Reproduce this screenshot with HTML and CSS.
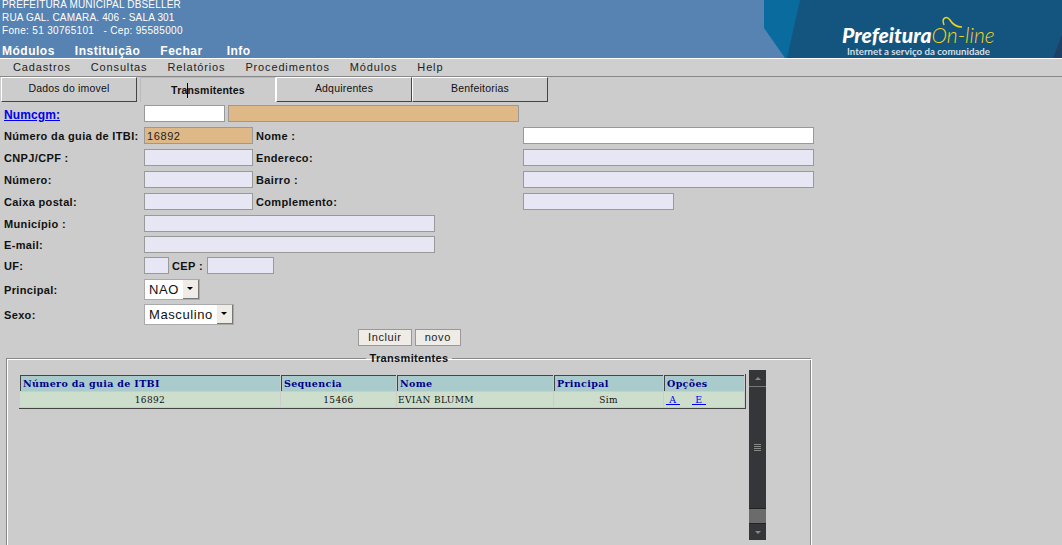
FILE: index.html
```html
<!DOCTYPE html>
<html lang="pt-BR">
<head>
    <meta charset="UTF-8">
    <title>Prefeitura On-line</title>
    <link rel="stylesheet" href="styles.css">
</head>
<body>
    <header class="topo">
        <div class="topo-info">
            <div class="endereco">
                <div>PREFEITURA MUNICIPAL DBSELLER</div>
                <div>RUA GAL. CAMARA. 406 - SALA 301</div>
                <div class="fone">Fone: 51 30765101 &nbsp;&nbsp;- Cep: 95585000</div>
            </div>
            <nav class="menu-topo">
                <a>Módulos</a>
                <a>Instituição</a>
                <a>Fechar</a>
                <a class="info">Info</a>
            </nav>
        </div>
        <div class="logo">
            <svg class="logo-fundo" width="298" height="58" viewBox="0 0 298 58">
                <polygon points="0,0 298,0 298,58 21,58 0,28" fill="#0a6b9e"/>
                <polygon points="36,0 298,0 298,58 23,58" fill="#14557f"/>
                <polygon points="289,58 295,43 298,35 298,58" fill="#1e3f66"/>
                <path d="M180 25 C177 17 183 16 186 20 C189 25 193 27 198 27" fill="none" stroke="#f0d21a" stroke-width="1.5"/>
            </svg>
            <div class="logo-texto">
                <div class="logo-nome"><b>Prefeitura</b><span>On-line</span></div>
                <div class="logo-sub">Internet a serviço da comunidade</div>
            </div>
        </div>
    </header>

    <nav class="menu">
        <a>Cadastros</a>
        <a>Consultas</a>
        <a>Relatórios</a>
        <a>Procedimentos</a>
        <a>Módulos</a>
        <a>Help</a>
    </nav>

    <div class="abas">
        <div class="aba">Dados do imovel</div>
        <div class="aba ativa">Transmitentes<span class="cursor"></span></div>
        <div class="aba">Adquirentes</div>
        <div class="aba">Benfeitorias</div>
    </div>

    <form class="form">
        <div class="linha linha-cgm">
            <a class="rotulo link">Numcgm:</a>
            <input class="campo branco w81" type="text">
            <input class="campo bege w291" type="text">
        </div>
        <div class="linha linha-dupla">
            <label class="rotulo">Número da guia de ITBI:</label>
            <input class="campo bege w109" type="text" value="16892">
            <label class="rotulo">Nome :</label>
            <input class="campo branco w291" type="text">
        </div>
        <div class="linha linha-dupla">
            <label class="rotulo">CNPJ/CPF :</label>
            <input class="campo w109" type="text">
            <label class="rotulo">Endereco:</label>
            <input class="campo w291" type="text">
        </div>
        <div class="linha linha-dupla">
            <label class="rotulo">Número:</label>
            <input class="campo w109" type="text">
            <label class="rotulo">Bairro :</label>
            <input class="campo w291" type="text">
        </div>
        <div class="linha linha-dupla">
            <label class="rotulo">Caixa postal:</label>
            <input class="campo w109" type="text">
            <label class="rotulo">Complemento:</label>
            <input class="campo w151" type="text">
        </div>
        <div class="linha linha-baixa">
            <label class="rotulo">Município :</label>
            <input class="campo w291" type="text">
        </div>
        <div class="linha linha-baixa">
            <label class="rotulo">E-mail:</label>
            <input class="campo w291" type="text">
        </div>
        <div class="linha">
            <label class="rotulo">UF:</label>
            <input class="campo w25" type="text">
            <label class="rotulo rotulo-cep">CEP :</label>
            <input class="campo w67" type="text">
        </div>
        <div class="linha linha-select">
            <label class="rotulo">Principal:</label>
            <div class="select">NAO<span class="seta"></span></div>
        </div>
        <div class="linha linha-select">
            <label class="rotulo">Sexo:</label>
            <div class="select">Masculino<span class="seta"></span></div>
        </div>
        <div class="botoes">
            <button type="button">Incluir</button>
            <button type="button">novo</button>
        </div>
    </form>

    <fieldset class="quadro">
        <legend>Transmitentes</legend>
        <div class="quadro-corpo">
            <table class="grid">
                <tr>
                    <th class="c1">Número da guia de ITBI</th>
                    <th class="c2">Sequencia</th>
                    <th class="c3">Nome</th>
                    <th class="c4">Principal</th>
                    <th class="c5">Opções</th>
                </tr>
                <tr>
                    <td class="centro">16892</td>
                    <td class="centro">15466</td>
                    <td>EVIAN BLUMM</td>
                    <td class="centro">Sim</td>
                    <td class="opcoes"><a>&nbsp;A&nbsp;</a><a>&nbsp;E&nbsp;</a></td>
                </tr>
            </table>
            <div class="scroll">
                <div class="scroll-bt"><span class="sobe"></span></div>
                <div class="scroll-barra"><span class="grip"></span></div>
                <div class="scroll-trilho"></div>
                <div class="scroll-bt"><span class="desce"></span></div>
            </div>
        </div>
    </fieldset>
</body>
</html>
```

FILE: styles.css
```css
html, body {
    margin: 0;
    padding: 0;
    height: 545px;
    overflow: hidden;
}
body {
    background: #cccccc;
    font-family: "Liberation Sans", Arial, sans-serif;
    color: #000;
}
.topo {
    display: flex;
    justify-content: space-between;
    height: 58px;
    background: #5783b3;
    overflow: hidden;
}
.topo-info {
    padding-left: 2px;
    color: #fff;
}
.endereco {
    font-size: 10px;
    line-height: 13px;
    letter-spacing: 0.17px;
    height: 47px;
    margin-top: -2px;
}
.endereco .fone {
    letter-spacing: 0.32px;
}
.menu-topo {
    display: flex;
    gap: 20px;
    font-size: 12px;
    font-weight: bold;
    line-height: 13px;
    letter-spacing: 0.5px;
}
.menu-topo .info {
    margin-left: 4px;
}
.logo {
    position: relative;
    width: 298px;
    height: 58px;
}
.logo-fundo {
    display: block;
}
.logo-texto {
    position: absolute;
    left: 78px;
    top: 24px;
    color: #fff;
}
.logo-nome {
    font-family: "Lato", sans-serif;
    font-size: 21px;
    line-height: 21px;
    white-space: nowrap;
}
.logo-nome b {
    font-style: italic;
    font-weight: 900;
}
.logo-nome span {
    color: #f0d21a;
    font-style: italic;
    font-weight: 300;
}
.logo-sub {
    margin: 1px 0 0 5px;
    font-family: "Lato", sans-serif;
    font-size: 9.7px;
    line-height: 11px;
    font-weight: 700;
    color: #d5dfe6;
    white-space: nowrap;
}
.menu {
    display: flex;
    gap: 20px;
    height: 17px;
    padding-left: 13px;
    border-top: 1px solid #fff;
    border-bottom: 1px solid #888;
    background: #cfcfcf;
    font-size: 11px;
    line-height: 16px;
    letter-spacing: 0.85px;
    color: #222;
}
.abas {
    display: flex;
    height: 25px;
    padding-left: 1px;
}
.aba {
    box-sizing: border-box;
    width: 136px;
    border-top: 1px solid #fff;
    border-left: 1px solid #fff;
    border-right: 1px solid #444;
    border-bottom: 1px solid #444;
    background: #cccccc;
    font-size: 10.5px;
    line-height: 20px;
    letter-spacing: 0.2px;
    text-align: center;
    color: #111;
}
.aba.ativa {
    position: relative;
    margin-left: 3px;
    border-bottom: 0;
    border-right-color: #fff;
    border-top-color: #bbb;
    border-left-color: #bbb;
    font-weight: bold;
    line-height: 25px;
}
.cursor {
    position: absolute;
    left: 46px;
    top: 5px;
    width: 1px;
    height: 15px;
    background: #000;
}
.form {
    padding-left: 4px;
}
.linha {
    display: flex;
    align-items: flex-start;
    height: 22px;
}
.linha-baixa {
    height: 21px;
}
.linha-cgm {
    height: 23px;
}
.linha-cgm .campo {
    margin-top: 3px;
}
.linha-select {
    height: 25px;
    align-items: center;
}
.rotulo {
    display: block;
    align-self: center;
    width: 140px;
    flex: none;
    font-size: 11px;
    font-weight: bold;
    letter-spacing: 0.35px;
    color: #111;
}
.linha-dupla .rotulo + .campo + .rotulo {
    width: 267px;
    margin-left: 3px;
}
.link {
    padding-top: 2px;
    font-size: 12px;
    letter-spacing: 0.1px;
    color: #0000ee;
    text-decoration: underline;
}
.campo {
    box-sizing: border-box;
    height: 17px;
    margin-top: 2px;
    padding: 0 2px;
    border: 1px solid #999;
    background: #e6e6f5;
    font-family: "Liberation Sans", sans-serif;
    font-size: 11px;
    letter-spacing: 0.6px;
    color: #222;
}
.branco {
    background: #fff;
}
.bege {
    background: #deb887;
}
.w25 { width: 25px; }
.w67 { width: 67px; }
.w81 { width: 81px; margin-right: 3px; }
.w109 { width: 109px; }
.w151 { width: 151px; }
.w291 { width: 291px; }
.rotulo-cep {
    width: auto;
    margin: 0 4px 0 3px;
}
.select {
    display: flex;
    align-items: center;
    gap: 4px;
    box-sizing: border-box;
    height: 21px;
    padding: 0 0 0 4px;
    border: 1px solid #aaa;
    background: #fff;
    font-size: 13px;
    letter-spacing: 0.6px;
    color: #111;
}
.seta {
    position: relative;
    width: 16px;
    height: 19px;
    background: #efebe7;
    border-right: 1px solid #777;
    border-bottom: 1px solid #777;
    box-sizing: border-box;
}
.seta::after {
    content: "";
    position: absolute;
    left: 4px;
    top: 7px;
    border-left: 3px solid transparent;
    border-right: 3px solid transparent;
    border-top: 3px solid #000;
}
.botoes {
    display: flex;
    justify-content: center;
    gap: 3px;
    width: 811px;
    margin-top: 2px;
}
.botoes button {
    box-sizing: border-box;
    height: 17px;
    padding: 0 9px;
    border: 1px solid #999;
    background: #efebe7;
    font-family: "Liberation Sans", sans-serif;
    font-size: 11px;
    line-height: 15px;
    letter-spacing: 0.6px;
    color: #222;
}
.quadro {
    box-sizing: border-box;
    width: 806px;
    height: 200px;
    margin: 6px 0 0 6px;
    padding: 0;
    border: 0;
    border-top: 1px solid #888;
    border-left: 1px solid #888;
    border-right: 1px solid #fff;
    box-shadow: inset 1px 1px 0 #fff, inset -1px 0 0 #888;
}
.quadro legend {
    margin: 0 auto;
    padding: 0 3px;
    font-size: 11px;
    font-weight: bold;
    letter-spacing: 0.35px;
    color: #111;
}
.quadro-corpo {
    display: flex;
    align-items: flex-start;
    gap: 3px;
    padding: 10px 0 0 12px;
}
.grid {
    border-collapse: separate;
    border-spacing: 1px;
    border-right: 1px solid #444;
    border-bottom: 1px solid #444;
    table-layout: fixed;
    font-family: "DejaVu Serif", "Liberation Serif", serif;
    font-size: 9px;
    letter-spacing: 0.35px;
}
.grid th {
    height: 15px;
    padding: 0 2px;
    border-top: 1px solid #444;
    border-left: 1px solid #444;
    background: #a9cbcc;
    color: #00008b;
    text-align: left;
    font-size: 9.5px;
    white-space: nowrap;
}
.grid td {
    height: 15px;
    padding: 0 1px;
    background: #cddfcc;
    color: #111;
    white-space: nowrap;
}
.c1 { width: 255px; }
.c2 { width: 110px; }
.c3 { width: 151px; }
.c4 { width: 104px; }
.c5 { width: 75px; }
.grid .centro {
    text-align: center;
}
.opcoes {
    font-size: 9.5px;
}
.opcoes a {
    color: #0000ee;
    text-decoration: underline;
    margin-left: 1px;
}
.opcoes a + a {
    margin-left: 12px;
}
.scroll {
    display: flex;
    flex-direction: column;
    width: 17px;
    height: 170px;
    margin-top: -4px;
    background: #35363a;
}
.scroll-bt {
    display: flex;
    align-items: center;
    justify-content: center;
    height: 16px;
    flex: none;
}
.sobe, .desce {
    border-left: 3px solid transparent;
    border-right: 3px solid transparent;
}
.sobe { border-bottom: 3px solid #888; }
.desce { border-top: 3px solid #888; }
.scroll-barra {
    display: flex;
    align-items: center;
    justify-content: center;
    height: 122px;
    border-top: 1px solid #777;
    border-bottom: 1px solid #222;
}
.grip {
    width: 7px;
    height: 7px;
    background: repeating-linear-gradient(#888 0, #888 1px, transparent 1px, transparent 2px);
}
.scroll-trilho {
    height: 14px;
    background: #6b6b6b;
    border-bottom: 1px solid #222;
}
```
